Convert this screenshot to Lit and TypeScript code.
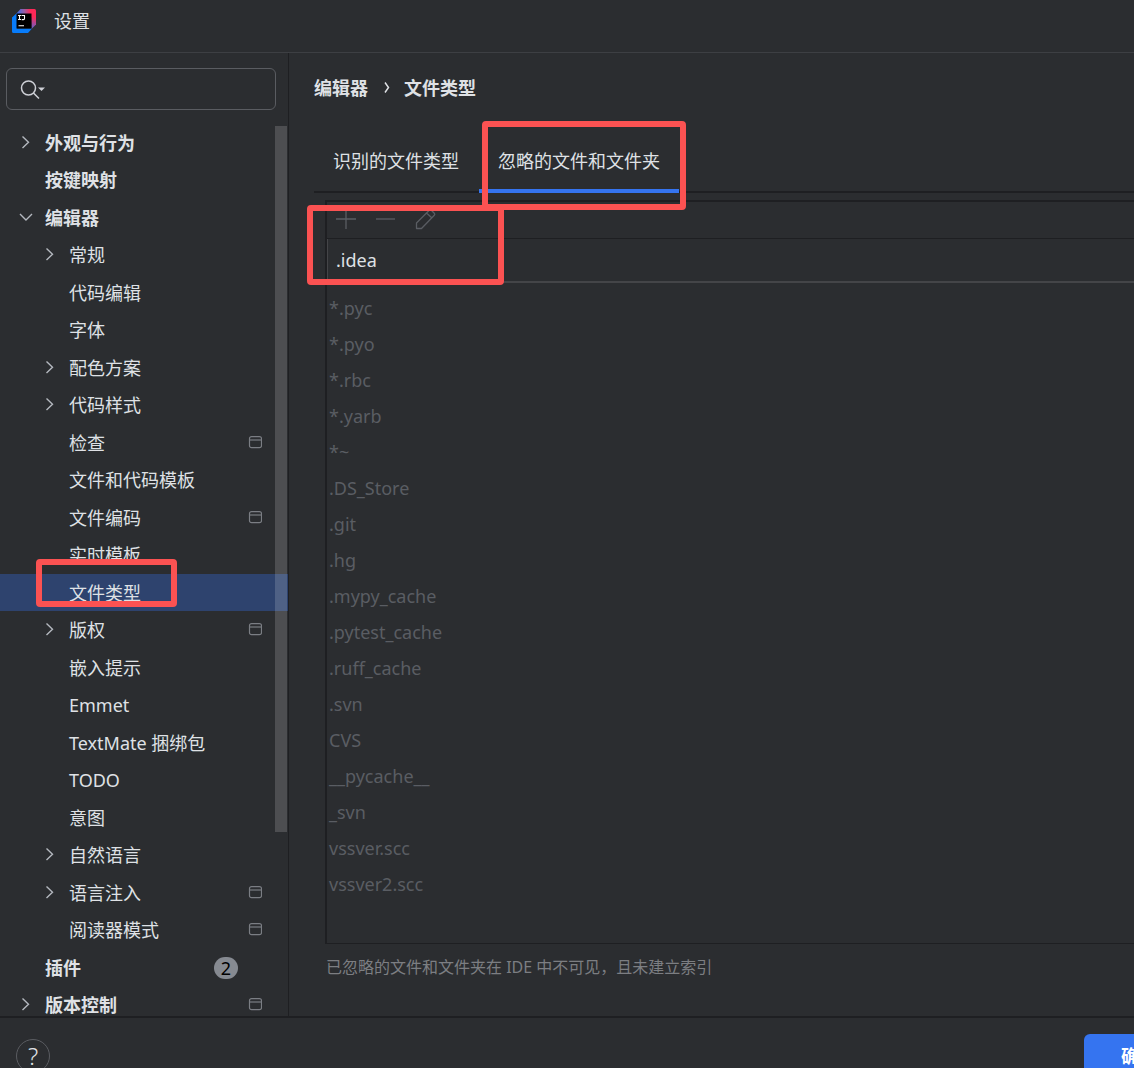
import { LitElement, html, css, svg, nothing } from "lit";
import { customElement, state } from "lit/decorators.js";
import { classMap } from "lit/directives/class-map.js";

interface TreeNode {
  label: string;
  level: 0 | 1;
  arrow?: "closed" | "open";
  project?: boolean;
  badge?: number;
}

const NODES: TreeNode[] = [
  { label: "外观与行为", level: 0, arrow: "closed" },
  { label: "按键映射", level: 0 },
  { label: "编辑器", level: 0, arrow: "open" },
  { label: "常规", level: 1, arrow: "closed" },
  { label: "代码编辑", level: 1 },
  { label: "字体", level: 1 },
  { label: "配色方案", level: 1, arrow: "closed" },
  { label: "代码样式", level: 1, arrow: "closed" },
  { label: "检查", level: 1, project: true },
  { label: "文件和代码模板", level: 1 },
  { label: "文件编码", level: 1, project: true },
  { label: "实时模板", level: 1 },
  { label: "文件类型", level: 1 },
  { label: "版权", level: 1, arrow: "closed", project: true },
  { label: "嵌入提示", level: 1 },
  { label: "Emmet", level: 1 },
  { label: "TextMate 捆绑包", level: 1 },
  { label: "TODO", level: 1 },
  { label: "意图", level: 1 },
  { label: "自然语言", level: 1, arrow: "closed" },
  { label: "语言注入", level: 1, arrow: "closed", project: true },
  { label: "阅读器模式", level: 1, project: true },
  { label: "插件", level: 0, badge: 2 },
  { label: "版本控制", level: 0, arrow: "closed", project: true },
];

const IGNORED = [
  "*.pyc", "*.pyo", "*.rbc", "*.yarb", "*~", ".DS_Store", ".git", ".hg",
  ".mypy_cache", ".pytest_cache", ".ruff_cache", ".svn", "CVS",
  "__pycache__", "_svn", "vssver.scc", "vssver2.scc",
];

const arrowIcon = (kind: "closed" | "open") => html`
  <svg class="arrow" width="16" height="16" viewBox="0 0 16 16" fill="none" stroke="#b4b8bf" stroke-width="1.4">
    ${kind === "closed" ? svg`<path d="M5.500 1.500L11.500 7.300L5.500 13" />` : svg`<path d="M3 4L9 10L15 4" />`}
  </svg>`;

const projectIcon = html`
  <svg class="project" width="14" height="14" viewBox="0 0 14 14" fill="none" stroke="#7b7e84" stroke-width="1.2">
    <rect x="1.500" y="0.700" width="12" height="11" rx="2" />
    <path d="M1.500 4H13.500" />
  </svg>`;

@customElement("app-root")
export class AppRoot extends LitElement {
  @state() private selected = "文件类型";

  static styles = css`
    :host {
      display: block;
      font-family: "Noto Sans", "Noto Sans CJK SC", sans-serif;
      font-size: 18px;
      line-height: 24px;
      color: #dfe1e5;
    }
    * { box-sizing: border-box; }
    button {
      font: inherit;
      color: inherit;
      background: none;
      border: 0;
      padding: 0;
      text-align: left;
    }
    ul { list-style: none; margin: 0; padding: 0; }
    .dialog {
      position: relative;
      display: grid;
      grid-template-rows: auto minmax(0, 1fr) auto;
      height: 100vh;
      overflow: hidden;
      background: #2b2d30;
    }
    .titlebar {
      display: flex;
      align-items: center;
      gap: 18px;
      height: 53px;
      padding: 0 12px 10px;
      border-bottom: 1px solid #3d3f43;
    }
    .title { margin: 0; font-size: 18px; font-weight: 400; }
    .body {
      display: grid;
      grid-template-columns: 289px minmax(0, 1fr);
      min-height: 0;
    }
    .side {
      display: flex;
      flex-direction: column;
      min-height: 0;
      border-right: 1px solid #1e1f22;
    }
    .search {
      display: flex;
      align-items: center;
      flex: none;
      height: 42px;
      margin: 15px 12px 14px 6px;
      padding-left: 12px;
      border: 1px solid #5a5c61;
      border-radius: 6px;
    }
    .search-input {
      flex: 1;
      min-width: 0;
      border: 0;
      outline: 0;
      background: none;
      color: inherit;
      font: inherit;
    }
    .tree-area { position: relative; flex: 1; min-height: 0; overflow: hidden; }
    .node { height: 38px; }
    .node:nth-child(odd) { height: 37px; }
    .node-button {
      display: flex;
      align-items: center;
      width: 100%;
      height: 100%;
      padding: 0 26px 0 17px;
    }
    .node-button.child { padding-left: 41px; }
    .node-button.top { font-weight: 700; }
    .node-button.selected { background: #2e436e; }
    .slot { flex: none; width: 28px; height: 16px; }
    .arrow { display: block; }
    .label { flex: 1; white-space: nowrap; }
    .badge {
      width: 24px;
      height: 22px;
      margin-right: 24px;
      border-radius: 11px;
      background: #868a91;
      color: #000;
      font-weight: 400;
      line-height: 22px;
      text-align: center;
    }
    .thumb {
      position: absolute;
      top: 2px;
      right: 1px;
      width: 12px;
      height: 706px;
      background: rgba(255, 255, 255, 0.16);
    }
    .main {
      display: flex;
      flex-direction: column;
      min-width: 0;
      padding: 23px 0 37px 25px;
    }
    .crumbs { display: flex; align-items: center; font-weight: 700; }
    .crumb-sep { width: 36px; height: 24px; }
    .tabs {
      display: flex;
      gap: 1px;
      margin-top: 32px;
      border-bottom: 2px solid #1e1f22;
    }
    .tab {
      height: 61px;
      padding: 0 19px;
      border-bottom: 4px solid transparent;
      margin-bottom: -2px;
      white-space: nowrap;
    }
    .tab.active { border-color: #3574f0; }
    .table {
      display: flex;
      flex-direction: column;
      flex: 1;
      min-height: 0;
      margin: 7px 0 0 11px;
      border: solid #1e1f22;
      border-width: 2px 0 1px 2px;
    }
    .toolbar {
      display: flex;
      align-items: center;
      gap: 16px;
      height: 37px;
      padding: 0 8px 2px;
      border-bottom: 1px solid #1e1f22;
    }
    .tool { display: block; width: 24px; height: 24px; }
    .tool svg { display: block; }
    .edit {
      flex: none;
      display: block;
      height: 44px;
      width: 100%;
      margin: 0 0 7px;
      padding: 0 8px;
      border: solid #444548;
      border-width: 0 0 2px 1px;
      outline: 0;
      border-radius: 0;
      background: none;
      color: inherit;
      font: inherit;
    }
    .row { height: 36px; padding-left: 2px; line-height: 36px; color: #5a5d63; }
    .hint { margin: 11px 0 0 12px; font-size: 16px; line-height: 24px; color: #7c7e82; }
    .footer {
      display: flex;
      align-items: flex-start;
      justify-content: space-between;
      height: 52px;
      padding: 16px 0 0 16px;
      border-top: 2px solid #1e1f22;
      overflow: hidden;
    }
    .help {
      flex: none;
      width: 34px;
      height: 34px;
      margin-top: 5px;
      border: 1px solid #5a5c61;
      border-radius: 50%;
      font-size: 24px;
      font-weight: 300;
      line-height: 32px;
      text-align: center;
    }
    .ok {
      flex: none;
      height: 44px;
      margin-right: -60px;
      padding: 0 37px;
      border-radius: 6px;
      background: #3574f0;
      color: #fff;
      font-weight: 700;
    }
    .mark {
      position: absolute;
      border: 6px solid #fb5252;
      border-radius: 4px;
      pointer-events: none;
    }
    .mark-tab { left: 482px; top: 121px; width: 204px; height: 89px; }
    .mark-entry { left: 307px; top: 205px; width: 197px; height: 80px; }
    .mark-node { left: 36px; top: 559px; width: 141px; height: 48px; }
  `;

  private renderNode(node: TreeNode) {
    const classes = {
      "node-button": true,
      top: node.level === 0,
      child: node.level === 1,
      selected: node.label === this.selected,
    };
    return html`
      <li class="node">
        <button class=${classMap(classes)} @click=${() => (this.selected = node.label)}>
          <span class="slot">${node.arrow ? arrowIcon(node.arrow) : nothing}</span>
          <span class="label">${node.label}</span>
          ${node.badge ? html`<span class="badge">${node.badge}</span>` : nothing}
          ${node.project ? projectIcon : nothing}
        </button>
      </li>`;
  }

  render() {
    return html`
      <div class="dialog">
        <header class="titlebar">
          <svg width="24" height="24" viewBox="0 0 24 24">
            <defs>
              <linearGradient id="logo-warm" x1="6" y1="6" x2="22" y2="4" gradientUnits="userSpaceOnUse">
                <stop offset="0" stop-color="#3f6fe8" />
                <stop offset="0.45" stop-color="#a25a9c" />
                <stop offset="0.8" stop-color="#fe2857" />
              </linearGradient>
              <linearGradient id="logo-side" x1="22" y1="8" x2="19" y2="22" gradientUnits="userSpaceOnUse">
                <stop offset="0" stop-color="#fe2857" />
                <stop offset="1" stop-color="#3f6fe8" />
              </linearGradient>
            </defs>
            <path d="M0 8.500L5 4V19.500H20L16 24H1.500Q0 24 0 22.500Z" fill="#087cfa" />
            <path d="M4.500 4.500L8.500 0H22.500Q24 0 24 1.500V8H4.500Z" fill="url(#logo-warm)" />
            <path d="M19 4H24V15.500L19.500 20Z" fill="url(#logo-side)" />
            <rect x="4.500" y="4.500" width="15" height="15" fill="#000" />
            <path d="M6 6.500H9M7.500 6.500V10.500M6 10.500H9M9.500 6.500H12.500V9.500Q12.500 10.600 11.500 10.600H9.700M6.500 16.700H12" fill="none" stroke="#fff" stroke-width="1.100" />
          </svg>
          <h1 class="title">设置</h1>
        </header>

        <div class="body">
          <nav class="side" aria-label="设置">
            <label class="search">
              <svg width="28" height="24" viewBox="0 0 28 24" fill="none" stroke="#ced0d6" stroke-width="1.500">
                <circle cx="9.500" cy="11" r="7" />
                <path d="M14.500 16L20 21.500" />
                <path d="M19 10.500H26L22.500 14Z" fill="#ced0d6" stroke="none" />
              </svg>
              <input class="search-input" type="text" aria-label="搜索" />
            </label>
            <div class="tree-area">
              <ul>${NODES.map((n) => this.renderNode(n))}</ul>
              <div class="thumb"></div>
            </div>
          </nav>

          <main class="main">
            <div class="crumbs">
              <span>编辑器</span>
              <svg class="crumb-sep" viewBox="0 0 36 24" fill="none" stroke="#dfe1e5" stroke-width="1.500">
                <path d="M17 6.500L20.500 11.500L17 16.500" />
              </svg>
              <span>文件类型</span>
            </div>
            <div class="tabs" role="tablist">
              <button class="tab" role="tab" aria-selected="false">识别的文件类型</button>
              <button class="tab active" role="tab" aria-selected="true">忽略的文件和文件夹</button>
            </div>
            <section class="table">
              <div class="toolbar">
                <button class="tool" aria-label="添加" disabled>
                  <svg width="24" height="24" viewBox="0 0 24 24" stroke="#5a5d63" stroke-width="1.300"><path d="M1 12H21M11 2V22" /></svg>
                </button>
                <button class="tool" aria-label="移除" disabled>
                  <svg width="24" height="24" viewBox="0 0 24 24" stroke="#5a5d63" stroke-width="1.300"><path d="M1 12H20" /></svg>
                </button>
                <button class="tool" aria-label="编辑" disabled>
                  <svg width="24" height="24" viewBox="0 0 24 24" fill="none" stroke="#5a5d63" stroke-width="1.300" stroke-linejoin="round">
                    <path d="M1.500 21.500V16L14.300 3.200Q15.300 2.200 16.300 3.200L19.300 6.200Q20.300 7.200 19.300 8.200L6.500 21.500ZM11.500 6L17 11" />
                  </svg>
                </button>
              </div>
              <input class="edit" type="text" aria-label="忽略模式" .value=${".idea"} />
              <ul>${IGNORED.map((p) => html`<li class="row">${p}</li>`)}</ul>
            </section>
            <p class="hint">已忽略的文件和文件夹在 IDE 中不可见，且未建立索引</p>
          </main>
        </div>

        <footer class="footer">
          <button class="help" aria-label="帮助">?</button>
          <button class="ok">确定</button>
        </footer>

        <div class="mark mark-tab"></div>
        <div class="mark mark-entry"></div>
        <div class="mark mark-node"></div>
      </div>`;
  }
}
